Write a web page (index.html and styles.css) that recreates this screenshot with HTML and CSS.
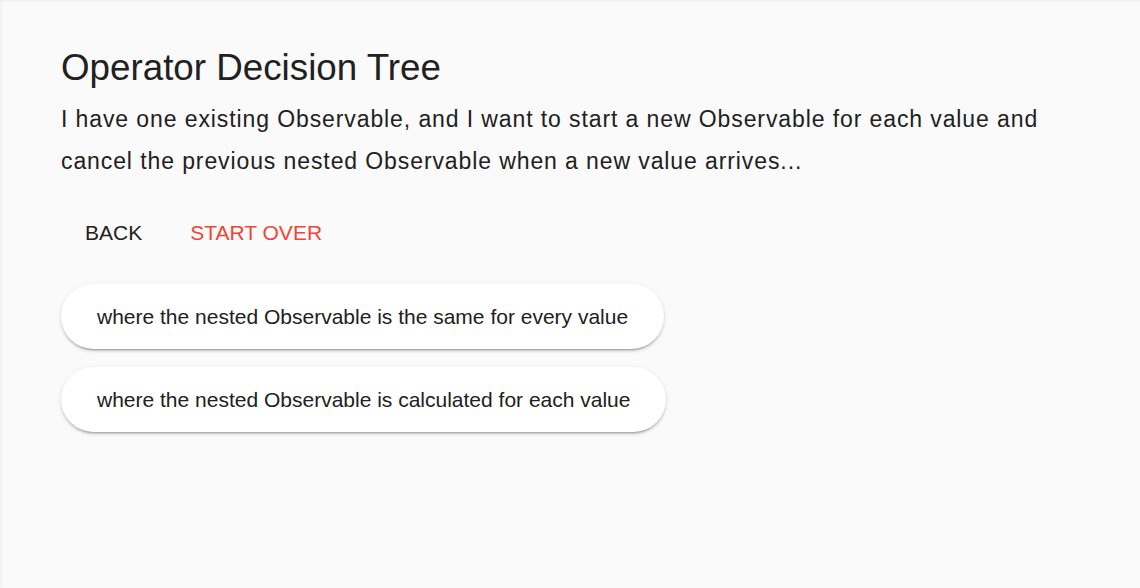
FILE: index.html
```html
<!DOCTYPE html>
<html>
<head>
<meta charset="utf-8">
<link rel="stylesheet" href="styles.css">
</head>
<body>
<main class="page">
  <h1 class="title">Operator Decision Tree</h1>
  <p class="question">I have one existing Observable, and I want to start a new Observable for each value and cancel the previous nested Observable when a new value arrives...</p>
  <div class="nav">
    <button class="flat">BACK</button>
    <button class="flat warn">START OVER</button>
  </div>
  <div class="options">
    <button class="pill">where the nested Observable is the same for every value</button>
    <button class="pill">where the nested Observable is calculated for each value</button>
  </div>
</main>
</body>
</html>
```
FILE: styles.css
```css
html, body {
  margin: 0;
  height: 100%;
}
body {
  background: #fafafa;
  font-family: "Liberation Sans", Arial, sans-serif;
  color: #212121;
  box-shadow: inset 0 3px 3px -2px rgba(0,0,0,0.06), inset 3px 0 3px -2px rgba(0,0,0,0.05);
}
.page {
  padding: 45px 61px 0;
}
.title {
  margin: 0;
  font-size: 36.75px;
  font-weight: 400;
  line-height: 46px;
}
.question {
  margin: 7px 0 0;
  font-size: 23px;
  line-height: 42px;
  letter-spacing: 0.9px;
  max-width: 1000px;
}
.nav {
  display: flex;
  margin-top: 27px;
}
.flat {
  font: inherit;
  font-size: 21px;
  background: none;
  border: 0;
  padding: 0 24px;
  height: 48px;
  color: #212121;
  cursor: pointer;
}
.flat.warn {
  color: #f44336;
}
.options {
  display: flex;
  flex-direction: column;
  align-items: flex-start;
  gap: 18px;
  margin-top: 27px;
}
.pill {
  font: inherit;
  font-size: 21px;
  color: #212121;
  background: #fff;
  border: 0;
  height: 65px;
  padding: 0 36px;
  border-radius: 33px;
  box-shadow: 0 3px 2px -2px rgba(0,0,0,0.25), 0 2px 3px 0 rgba(0,0,0,0.14), 0 1px 6px 0 rgba(0,0,0,0.06);
  cursor: pointer;
}
```
